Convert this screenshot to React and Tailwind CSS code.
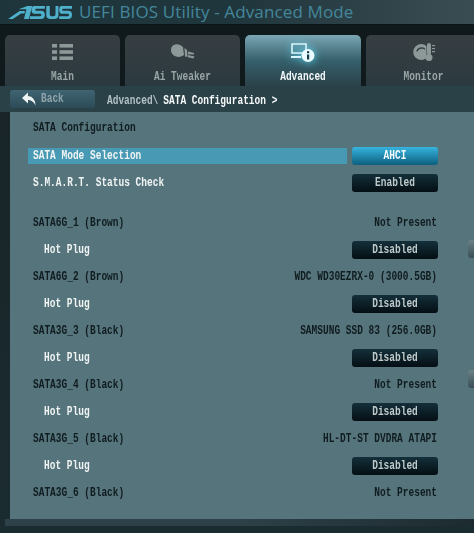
import React from 'react';

const mono = "font-['Liberation_Mono',monospace]";

// BIOS font is narrow and tall, so the mono face gets stretched vertically
function Txt({ children, className = '', right = false }) {
  return (
    <span
      className={`inline-block text-[9.5px] leading-none scale-y-[1.4] whitespace-pre font-bold ${mono} ${right ? 'origin-right' : 'origin-left'} ${className}`}
    >
      {children}
    </span>
  );
}

function AsusLogo() {
  return (
    <svg width="64" height="13" viewBox="0 0 66 14" preserveAspectRatio="none" fill="#4fb0cc" className="shrink-0">
      <path d="M0 14 L12 5.5 L17.5 5.5 L17 8 L13.5 8 L5 14 Z" />
      <path d="M11 3.5 L20 0 L25 0 L21.5 14 L16.5 14 L19 3.5 Z" />
      <path d="M27 0 H38 V3 H29.5 Q28 3 28 4 Q28 5 29.5 5 H34 Q38 5 38 9.5 Q38 14 34 14 H22.5 V11 H33 Q34.5 11 34.5 9.8 Q34.5 8.4 33 8.4 H28 Q24.3 8.4 24.3 4.2 Q24.3 0 27 0 Z" />
      <path d="M39.5 0 H43 V9 Q43 11 45 11 H47 Q49 11 49 9 V0 H52 V10 Q52 14 47.5 14 H44 Q39.5 14 39.5 10 Z" />
      <path d="M55 0 H66 V3 H57 Q55.8 3 55.8 4 Q55.8 5 57 5 H62 Q66 5 66 9.5 Q66 14 62 14 H52.8 V11 H61.5 Q63 11 63 9.8 Q63 8.4 61.5 8.4 H56.5 Q52.8 8.4 52.8 4.2 Q52.8 0 55 0 Z" />
    </svg>
  );
}

function MainIcon() {
  return (
    <svg width="21" height="16" viewBox="0 0 21 16" fill="#8d9899">
      <rect x="0" y="0" width="5" height="3.6" />
      <rect x="7.5" y="0" width="13.5" height="3.6" />
      <rect x="0" y="6.2" width="5" height="3.6" />
      <rect x="7.5" y="6.2" width="13.5" height="3.6" />
      <rect x="0" y="12.4" width="5" height="3.6" />
      <rect x="7.5" y="12.4" width="13.5" height="3.6" />
    </svg>
  );
}

function TweakerIcon() {
  return (
    <svg width="24" height="16" viewBox="0 0 24 16" fill="#8d9899">
      <path d="M5 0.2 Q9 -0.3 12 3 L13 11 Q9 14 5 12.6 Q0 10.5 0 6 Q0 1 5 0.2 Z" />
      <path d="M13.5 4 L16 6 L16.5 13 L14 12.5 Z" />
      <path d="M17 7.5 L23 9 L23 10.5 L17 10.2 Z" />
      <path d="M17 11 L23.5 12.5 L22.5 14.5 L17 13.2 Z" />
    </svg>
  );
}

function AdvancedIcon() {
  return (
    <svg width="24" height="19" viewBox="0 0 24 19" fill="none" className="drop-shadow-[0_0_4px_#5fdcf5]">
      <path d="M1 1 H15 V10 H1 Z" stroke="#d8f6fc" strokeWidth="1.6" />
      <rect x="0" y="13" width="10" height="2" fill="#d8f6fc" />
      <circle cx="17" cy="12.5" r="6.5" fill="#eafcff" />
      <rect x="16" y="11.5" width="2.2" height="5" fill="#123a47" />
      <rect x="16" y="8.2" width="2.2" height="2" fill="#123a47" />
    </svg>
  );
}

function MonitorIcon() {
  return (
    <svg width="22" height="18" viewBox="0 0 22 18" fill="#8d9899">
      <path d="M13.5 3 A8 8 0 1 0 13.5 15 Z" />
      <path d="M3.2 8 A5.5 5.5 0 0 1 12 5.6 L12 7 A4.5 4.5 0 0 0 4.5 8.8 Z" fill="#333a3e" />
      <rect x="14" y="0" width="4" height="12" rx="2" />
      <circle cx="16" cy="14.5" r="3.5" />
      <rect x="19" y="2" width="3" height="1.2" />
      <rect x="19" y="5" width="3" height="1.2" />
      <rect x="19" y="8" width="3" height="1.2" />
    </svg>
  );
}

function Tab({ icon, label, active = false, className = '' }) {
  return (
    <div
      className={`h-[51px] shrink-0 flex flex-col items-center rounded-t-[5px] pt-[6px] ${
        active
          ? 'bg-gradient-to-b from-[#7ba6b3] via-[#35606c] to-[#2b4148]'
          : 'bg-gradient-to-b from-[#373e42] to-[#2b3a3f]'
      } ${className}`}
    >
      <div className="h-[22px] flex items-center justify-center">{icon}</div>
      <div className="mt-[9px] h-[10px] flex items-center">
        <Txt className={active ? 'text-[#f1f7f8]' : 'text-[#9aa5a6]'}>{label}</Txt>
      </div>
    </div>
  );
}

function Row({ label, value, button, selected = false, sub = false, dark = false, className = '' }) {
  return (
    <div className={`h-[27px] flex items-center ${className}`}>
      <div
        className={`flex-1 h-[16px] flex items-center ml-[18px] mr-[5px] ${selected ? 'bg-[#4899b3]' : ''} ${sub ? 'pl-[16px]' : 'pl-[5px]'}`}
      >
        <Txt className={dark ? 'text-[#0f1c20]' : 'text-[#f0f4f4]'}>{label}</Txt>
      </div>
      <div className="w-[86px] flex justify-end items-center shrink-0">
        {value && <Txt right className="text-[#0f1c20] pr-px">{value}</Txt>}
        {button && (
          <div
            className={`w-[86px] h-[18px] rounded-[3px] flex items-center justify-center ${
              selected
                ? 'bg-gradient-to-b from-[#36b5e0] to-[#0d5f7f]'
                : 'bg-gradient-to-b from-[#14303b] to-[#050f14]'
            }`}
          >
            <Txt className={`origin-center! ${selected ? 'text-[#f4fbfd]' : 'text-[#bfcacb]'}`}>{button}</Txt>
          </div>
        )}
      </div>
    </div>
  );
}

export default function App() {
  return (
    <div className="w-[474px] h-[533px] overflow-hidden bg-gradient-to-b from-[#172226] to-[#1b2c30]">
      {/* Title strip */}
      <div className="h-[25px] pl-[8px] flex items-center bg-gradient-to-r from-[#1f353c] via-[#20363d] to-[#3a4d52] border-b border-[#0c1316]">
        <AsusLogo />
        <span className="ml-[7px] text-[17px] leading-[20px] tracking-[0.13px] whitespace-pre text-[#44879b] font-['Open_Sans',sans-serif]">
          UEFI BIOS Utility - Advanced Mode
        </span>
      </div>

      {/* Tabs */}
      <div className="flex gap-[5px] pl-[5px] pt-[10px] bg-[#101a1d]">
        <Tab icon={<MainIcon />} label="Main" className="w-[115px]" />
        <Tab icon={<TweakerIcon />} label="Ai Tweaker" className="w-[115px]" />
        <Tab icon={<AdvancedIcon />} label="Advanced" active className="w-[116px]" />
        <Tab icon={<MonitorIcon />} label="Monitor" className="w-[115px]" />
      </div>

      {/* Breadcrumb */}
      <div className="h-[26px] pl-[10px] flex items-center bg-[#2b4148]">
        <div className="w-[85px] h-[18px] rounded-[3px] bg-gradient-to-b from-[#3f6472] to-[#2d4b57] flex items-center pl-[12px]">
          <svg width="14" height="14" viewBox="0 0 14 14" fill="#eef3f4">
            <path d="M0 6 L6 0.5 L6 4 Q13 4.5 13.5 13.5 Q11 8 6 8 L6 11.5 Z" />
          </svg>
          <Txt className="ml-[5px] text-[#8fa5ab]">Back</Txt>
        </div>
        <div className="ml-[12px] mt-[3px] flex items-center">
          <Txt className="text-[#b3c1c4]">Advanced\</Txt>
          <Txt className="ml-[5px] text-[#f7fafa]">SATA Configuration &gt;</Txt>
        </div>
      </div>

      {/* Panel */}
      <div className="ml-[10px] h-[407px] bg-[#56747b] pt-[2px] pr-[36px] relative">
        <Row label="SATA Configuration" dark />
        <Row label="SATA Mode Selection" button="AHCI" selected className="mt-[1px]" />
        <Row label="S.M.A.R.T. Status Check" button="Enabled" />
        <Row label="SATA6G_1 (Brown)" value="Not Present" dark className="mt-[13px]" />
        <Row label="Hot Plug" button="Disabled" sub />
        <Row label="SATA6G_2 (Brown)" value="WDC WD30EZRX-0 (3000.5GB)" dark />
        <Row label="Hot Plug" button="Disabled" sub />
        <Row label="SATA3G_3 (Black)" value="SAMSUNG SSD 83 (256.0GB)" dark />
        <Row label="Hot Plug" button="Disabled" sub />
        <Row label="SATA3G_4 (Black)" value="Not Present" dark />
        <Row label="Hot Plug" button="Disabled" sub />
        <Row label="SATA3G_5 (Black)" value="HL-DT-ST DVDRA ATAPI" dark />
        <Row label="Hot Plug" button="Disabled" sub />
        <Row label="SATA3G_6 (Black)" value="Not Present" dark />

        {/* scrollbar stubs at the cropped right edge */}
        <div className="absolute right-0 top-[128px] w-[6px] h-[18px] rounded-l-[3px] bg-gradient-to-b from-[#6b8288] to-[#3a4f55]" />
        <div className="absolute right-0 top-[258px] w-[6px] h-[18px] rounded-l-[3px] bg-gradient-to-b from-[#6b8288] to-[#3a4f55]" />
      </div>

      {/* Bottom edge */}
      <div className="ml-[5px] h-[7px] bg-gradient-to-r from-[#2d4148] via-[#2d4148] to-[#1d2b30]" />
    </div>
  );
}
